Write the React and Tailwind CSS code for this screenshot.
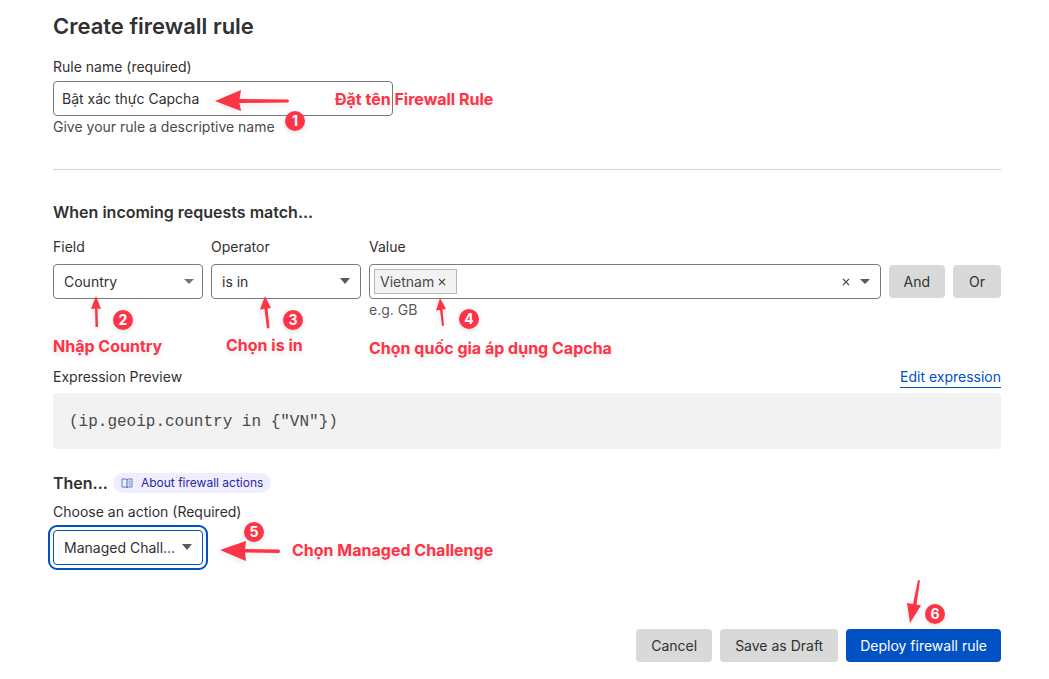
import React, { useState } from 'react';

const labelClass = 'block text-sm leading-5 text-[#313131]';
const selectClass =
  'h-[35px] w-full appearance-none overflow-hidden rounded-[4px] border bg-white pr-6 pl-2.5 text-sm text-ellipsis whitespace-nowrap';
const greyButton =
  'rounded-[4px] bg-[#d9d9d9] h-[33px] text-sm text-[#313131] hover:bg-[#cccccc] whitespace-nowrap';

function Caret({ className, height = 6 }) {
  return (
    <svg className={className} width="10" height={height} viewBox="0 0 10 6" preserveAspectRatio="none" aria-hidden="true">
      <path d="M0 0H10L5 6Z" fill="currentColor" />
    </svg>
  );
}

function Cross() {
  return (
    <svg width="8" height="8" viewBox="0 0 8 8" aria-hidden="true">
      <path d="M1 1L7 7M7 1L1 7" stroke="currentColor" strokeWidth="1.1" />
    </svg>
  );
}

function BookIcon() {
  return (
    <svg width="12" height="12" viewBox="0 0 12 12" fill="none" stroke="#4a6fc4" aria-hidden="true">
      <path d="M1 2H4.8L6 2.7L7.2 2H11V10H7.2L6 10.7L4.8 10H1Z" strokeWidth="0.9" />
      <path d="M6 2.7V10.7" strokeWidth="1.1" />
      <path d="M7.6 4.2H9.6M7.6 6H9.6M7.6 7.8H9.6" strokeWidth="0.8" />
    </svg>
  );
}

// Tutorial markers drawn over the form
function Step({ number, className }) {
  return (
    <span
      className={`pointer-events-none absolute flex size-5 items-center justify-center rounded-full bg-[#fd3445] text-sm font-bold text-white shadow-[0_2px_5px_rgba(0,0,0,0.12)] ${className}`}
    >
      {number}
    </span>
  );
}

function Note({ children, className }) {
  return (
    <span
      className={`pointer-events-none absolute whitespace-nowrap text-base leading-5 font-bold text-[#fd3445] [text-shadow:0_3px_5px_rgba(0,0,0,0.1)] ${className}`}
    >
      {children}
    </span>
  );
}

function Arrow({ d, width, height, className }) {
  return (
    <svg
      className={`pointer-events-none absolute drop-shadow-[0_2px_3px_rgba(0,0,0,0.1)] ${className}`}
      width={width}
      height={height}
      viewBox={`0 0 ${width} ${height}`}
      aria-hidden="true"
    >
      <path d={d} fill="#fd3445" />
    </svg>
  );
}

export default function App() {
  const [ruleName, setRuleName] = useState('Bật xác thực Capcha');
  const [field, setField] = useState('Country');
  const [operator, setOperator] = useState('is in');
  const [countries, setCountries] = useState(['Vietnam']);
  const [action, setAction] = useState('Managed Challenge');

  return (
    <main className="bg-white pt-2.5 pr-12 pb-4 pl-[53px] font-['Inter','Liberation_Sans',sans-serif] text-[#313131]">
      <h1 className="text-[22px] leading-8 font-semibold">Create firewall rule</h1>

      {/* Rule name */}
      <div className="relative mt-[15px] max-w-[340px]">
        <label htmlFor="rule-name" className={labelClass}>
          Rule name (required)
        </label>
        <input
          id="rule-name"
          type="text"
          value={ruleName}
          onChange={(e) => setRuleName(e.target.value)}
          className="mt-1 block h-[35px] w-full rounded-[4px] border border-[#797979] px-2 text-sm"
        />
        <p className="mt-px text-sm leading-5 text-[#4a4a4a]">Give your rule a descriptive name</p>
        <Arrow
          className="top-8 left-[161px]"
          width={76}
          height={24}
          d="M1 12L27 1L25.500 10L74 10.500Q76 12 74 13.500L25.500 14L27 22Z"
        />
        <Step number={1} className="top-[54px] left-[232px]" />
        <Note className="top-8 left-[282px]">Đặt tên Firewall Rule</Note>
      </div>

      <hr className="mt-8 border-[#d5d5d5]" />

      {/* Expression builder */}
      <h2 className="mt-[30px] text-base leading-6 font-semibold">When incoming requests match...</h2>
      <div className="mt-[13px] flex gap-2">
        <div className="relative w-[150px] shrink-0">
          <label htmlFor="field" className={labelClass}>
            Field
          </label>
          <div className="relative mt-[7px]">
            <select
              id="field"
              value={field}
              onChange={(e) => setField(e.target.value)}
              className={`${selectClass} border-[#797979]`}
            >
              <option>Country</option>
            </select>
            <Caret height={5} className="pointer-events-none absolute top-[15px] right-[9px] text-[#777777]" />
          </div>
          <Arrow className="top-[58px] left-[37px]" width={12} height={33} d="M6 1L11 14L7.500 13.500L8 32H5.500L5 13.500L1 14Z" />
          <Step number={2} className="top-[73px] left-[60px]" />
          <Note className="top-[99px] left-0">Nhập Country</Note>
        </div>

        <div className="relative w-[150px] shrink-0">
          <label htmlFor="operator" className={labelClass}>
            Operator
          </label>
          <div className="relative mt-[7px]">
            <select
              id="operator"
              value={operator}
              onChange={(e) => setOperator(e.target.value)}
              className={`${selectClass} border-[#797979]`}
            >
              <option>is in</option>
            </select>
            <Caret className="pointer-events-none absolute top-3.5 right-[11px] text-[#595959]" />
          </div>
          <Arrow className="top-[58px] left-12" width={13} height={35} d="M6 1L12 13L8.500 13.500L10.500 33L8 33.500L5.500 14L1 14.500Z" />
          <Step number={3} className="top-[73px] left-[72px]" />
          <Note className="top-[98px] left-[15px]">Chọn is in</Note>
        </div>

        <div className="relative min-w-0 flex-1">
          <label htmlFor="value" className={labelClass}>
            Value
          </label>
          <div className="mt-[7px] flex h-[35px] items-center rounded-[4px] border border-[#797979] pr-2.5 pl-1">
            {countries.map((country) => (
              <span
                key={country}
                className="flex h-[25px] shrink-0 items-center border border-[#b6b6b6] bg-[#f2f2f2] pl-[5px] text-sm text-[#4a4a4a]"
              >
                {country}
                <button
                  type="button"
                  aria-label={`Remove ${country}`}
                  onClick={() => setCountries(countries.filter((c) => c !== country))}
                  className="pr-2.5 pl-1"
                >
                  <Cross />
                </button>
              </span>
            ))}
            <input id="value" type="text" className="h-full min-w-0 flex-1 px-2 text-sm outline-none" />
            <button type="button" aria-label="Clear all" onClick={() => setCountries([])} className="mr-2.5 text-[#4a4a4a]">
              <Cross />
            </button>
            <button type="button" aria-label="Show countries" className="text-[#595959]">
              <Caret height={5} />
            </button>
          </div>
          <p className="mt-px text-sm leading-5 text-[#595959]">e.g. GB</p>
          <Arrow className="top-[60px] left-[66px]" width={12} height={30} d="M5 1L11 12L7.500 12.500L9 28.500L7 29L5 13L1 13.500Z" />
          <Step number={4} className="top-[72px] left-[90px]" />
          <Note className="top-[101px] left-0">Chọn quốc gia áp dụng Capcha</Note>
        </div>

        <div className="flex items-start gap-2 pt-7">
          <button type="button" className={`${greyButton} px-[15px]`}>
            And
          </button>
          <button type="button" className={`${greyButton} px-4`}>
            Or
          </button>
        </div>
      </div>

      {/* Preview */}
      <div className="mt-[47px] flex items-start justify-between">
        <h3 className={labelClass}>Expression Preview</h3>
        <a href="#edit" className="border-b border-[#0051c3] text-sm leading-5 text-[#0051c3]">
          Edit expression
        </a>
      </div>
      <pre className="mt-[5px] overflow-x-auto rounded-[4px] bg-[#f2f2f2] px-4 pt-[17px] pb-[15px] font-['Liberation_Mono',monospace] text-base leading-6 text-[#4a4a4a]">
        {'(ip.geoip.country in {"VN"})'}
      </pre>

      {/* Action */}
      <div className="mt-[22px] flex items-center gap-[5px]">
        <h2 className="text-base leading-6 font-semibold">Then...</h2>
        <a
          href="#actions"
          className="flex h-5 items-center gap-2 rounded-full bg-[#f0eefc] px-2 text-xs text-[#2c26a6]"
        >
          <BookIcon />
          About firewall actions
        </a>
      </div>
      <div className="relative mt-[7px] w-[150px]">
        <label htmlFor="action" className={`${labelClass} whitespace-nowrap`}>
          Choose an action (Required)
        </label>
        <div className="relative mt-2">
          <select
            id="action"
            value={action}
            onChange={(e) => setAction(e.target.value)}
            className={`${selectClass} border-[#0051c3] outline-2 outline-offset-[3px] outline-[#0051c3]`}
          >
            <option>Managed Challenge</option>
          </select>
          <Caret className="pointer-events-none absolute top-3.5 right-[11px] text-[#595959]" />
        </div>
        <Arrow
          className="top-[37px] left-[166px]"
          width={62}
          height={24}
          d="M1 11L27 2L26 10L60 10.500Q62 12 60 14L26 13.500L27 22Z"
        />
        <Step number={5} className="top-5 left-[191px]" />
        <Note className="top-[38px] left-[239px]">Chọn Managed Challenge</Note>
      </div>

      <div className="mt-16 flex justify-end gap-2">
        <button type="button" className={`${greyButton} px-[15px]`}>
          Cancel
        </button>
        <button type="button" className={`${greyButton} px-[15px]`}>
          Save as Draft
        </button>
        <div className="relative">
          <button
            type="button"
            className="h-[33px] rounded-[4px] bg-[#0051c3] px-3.5 text-sm whitespace-nowrap text-white hover:bg-[#003682]"
          >
            Deploy firewall rule
          </button>
          <Arrow
            className="-top-[50px] right-[79px]"
            width={16}
            height={45}
            d="M12 1L14 1.500L10.500 25.500L15 26.500L4 44L1 24L7 25Z"
          />
          <Step number={6} className="-top-[25px] right-14" />
        </div>
      </div>
    </main>
  );
}
